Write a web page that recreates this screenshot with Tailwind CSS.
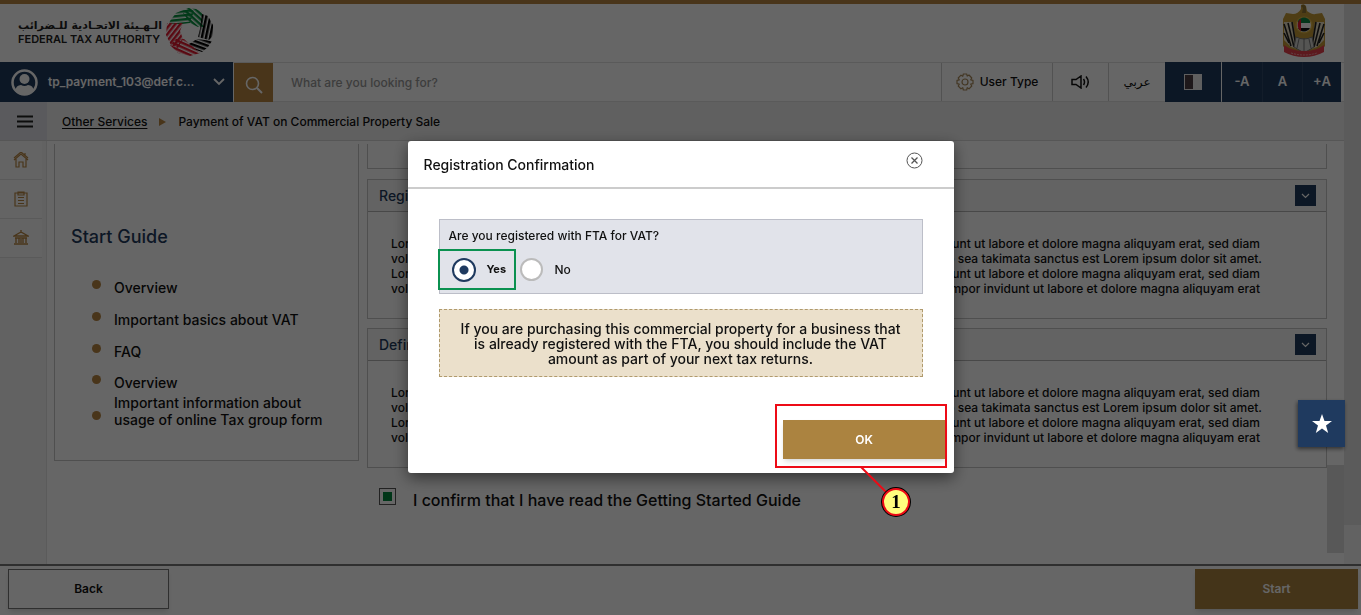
<!DOCTYPE html>
<html lang="en">
<head>
<meta charset="utf-8">
<meta name="viewport" content="width=device-width, initial-scale=1">
<title>Payment of VAT on Commercial Property Sale</title>
<script src="https://cdn.jsdelivr.net/npm/@tailwindcss/browser@4"></script>
</head>
<body class="flex h-screen flex-col overflow-hidden bg-white font-['Inter','Noto_Sans',sans-serif] text-xs font-medium text-[#111]">
<div class="flex min-h-0 flex-1">
  <div class="flex min-w-0 flex-1 flex-col border-t-4 border-[#b68542]">
    <header class="flex h-[58px] shrink-0 items-start justify-between pr-[18px] pl-[18px]">
      <a href="#" class="flex items-center gap-1 pt-1" aria-label="Federal Tax Authority">
        <span class="flex w-[144px] flex-col text-[#222]">
          <span dir="rtl" lang="ar" class="text-left font-['DejaVu_Sans',sans-serif] text-[11px] leading-[14px] font-bold whitespace-nowrap">الـهـيئة الاتحـادية للـضرائب</span>
          <span class="text-[11px] leading-3 font-semibold whitespace-nowrap">FEDERAL TAX AUTHORITY</span>
        </span>
        <svg class="size-12" viewBox="0 0 48 48" aria-hidden="true">
          <defs>
            <pattern id="g1" width="4" height="4" patternUnits="userSpaceOnUse" patternTransform="rotate(-6)"><rect width="4" height="2.500" fill="#07913f"/></pattern>
            <pattern id="g2" width="4" height="4" patternUnits="userSpaceOnUse" patternTransform="rotate(42)"><rect width="4" height="2.500" fill="#07913f"/></pattern>
            <pattern id="k1" width="4" height="4" patternUnits="userSpaceOnUse" patternTransform="rotate(-78)"><rect width="4" height="2.500" fill="#000"/></pattern>
            <pattern id="k2" width="4" height="4" patternUnits="userSpaceOnUse" patternTransform="rotate(20)"><rect width="4" height="2.500" fill="#000"/></pattern>
            <pattern id="r1" width="4" height="4" patternUnits="userSpaceOnUse" patternTransform="rotate(24)"><rect width="4" height="2.500" fill="#e0182d"/></pattern>
            <pattern id="r2" width="4" height="4" patternUnits="userSpaceOnUse" patternTransform="rotate(-52)"><rect width="4" height="2.500" fill="#e0182d"/></pattern>
          </defs>
          <path fill="url(#g1)" d="M4 13 10 5 22 0 28 3 24 15 16 16 3 16Z"/>
          <path fill="url(#g2)" d="M22 0 30 1 36 4 37 19 32 19 24 15 17 5Z"/>
          <path fill="url(#k1)" d="M36 6 42 8 47 17 47 28 43 32 32 29 34 21Z"/>
          <path fill="url(#k2)" d="M46 33 42 39 36 44 27 41 23 36 31 31Z"/>
          <path fill="url(#r1)" d="M10 31 18 31 34 45 24 48 12 45 4 37Z"/>
          <path fill="url(#r2)" d="M1 15 17 15 14 23 17 31 12 40 5 37 0 27Z"/>
        </svg>
      </a>
      <svg class="h-[54px] w-[44px]" viewBox="0 0 44 54" role="img" aria-label="United Arab Emirates emblem">
        <path d="M19 1q3-2 5 1l1 5q6 4 8 3l7-1 3 6v27l-5 6H6l-5-6V15l3-6 7 1q5 0 8-5z" fill="#c49a36"/>
        <path d="M19 2q3-3 5 1v6h-4l1-5z" fill="#8f7434"/>
        <path d="M2 18h9l3 22 4 6-9-3-7-7zM42 18h-9l-3 22-4 6 9-3 7-7z" fill="#e9dfc4"/>
        <path d="M2 20l7 22M6 19l6 24M10 18l4 24M42 20l-7 22M38 19l-6 24M34 18l-4 24M2 29l5 10M42 29l-5 10" stroke="#222" stroke-width="1.600" fill="none"/>
        <circle cx="22" cy="21" r="8.500" fill="#ddb445"/>
        <circle cx="22" cy="21" r="7" fill="#fff"/>
        <path d="M16 17a7 7 0 0 1 12 0v2H16z" fill="#0a8442"/>
        <path d="M16 24h12a7 7 0 0 1-12 0z" fill="#111"/>
        <path d="M19 15v12a7 7 0 0 1 0-12z" fill="#e31b2d"/>
        <path d="M14 33q8 4 16 0l2 10-10 6-10-6z" fill="#d4d4cf" stroke="#777"/>
        <path d="M22 34v13M17 35l-2 9M27 35l2 9" stroke="#777"/>
        <path d="M2 41q8 6 20 6t20-6v7q-9 5-20 5T2 48z" fill="#e5404d"/>
        <path d="M9 49q13 4 26 0" stroke="#f4a0a6" stroke-dasharray="2 1" fill="none"/>
      </svg>
    </header>

    <div class="flex h-10 shrink-0 border-y border-[#e2e2e2] pr-[3px] text-xs">
      <button class="-my-px flex w-[233px] shrink-0 items-center bg-[#1f3a5c] pr-2 pl-[11px] font-semibold text-white">
        <svg class="size-[27px] shrink-0" viewBox="0 0 27 27"><circle cx="13.500" cy="13.500" r="12" fill="#1f3a5c" stroke="#fff" stroke-width="2.500"/><circle cx="13.500" cy="10" r="5" fill="#fff"/><path d="M4 22q1-6 6-6 3.500 2 7 0 5 0 6 6-9.500 8-19 0" fill="#fff"/></svg>
        <span class="ml-[10px] flex-1 text-left">tp_payment_103@def.c...</span>
        <svg class="w-3" viewBox="0 0 12 8" fill="none" stroke="#fff" stroke-width="1.800"><path d="m1 1 5 5 5-5"/></svg>
      </button>
      <button aria-label="Search" class="-mb-px ml-px flex w-[39px] shrink-0 items-center justify-center bg-[#b68542] pt-1">
        <svg class="size-[18px]" viewBox="0 0 18 18" fill="none" stroke="#fff" stroke-width="1.600"><circle cx="7.500" cy="7.500" r="6"/><path d="m12 12 5 5" stroke-width="2"/></svg>
      </button>
      <input type="search" aria-label="Search the site" placeholder="What are you looking for?" class="min-w-0 flex-1 px-[18px] pt-px outline-none placeholder:text-[#999]">
      <button class="flex w-[111px] shrink-0 items-center justify-center gap-[6px] border-l border-[#ccc]">
        <svg class="size-[18px]" viewBox="0 0 18 18" fill="none" stroke="#a98a5b" stroke-width="1.200" stroke-linejoin="round"><path d="M7.300 1h3.400l.5 2.100 1.800-1.100L15.800 5l-1.100 1.800 2.300.5v3.400l-2.300.5 1.100 1.800-2.800 2.800-1.800-1.100-.5 2.300H7.300l-.5-2.300L5 15.800 2.200 13l1.100-1.800-2.300-.5V7.300l2.300-.5L2.200 5 5 2.200l1.800 1.100z"/><circle cx="9" cy="9" r="3"/></svg>
        User Type
      </button>
      <button aria-label="Read aloud" class="flex w-14 shrink-0 items-center justify-center border-l border-[#ccc]">
        <svg class="h-[14px] w-[19px]" viewBox="0 0 19 14" fill="none" stroke="#111" stroke-width="1.500"><path d="M1 4.500h4L10 1v12L5 9.500H1zM12.500 4q2 3 0 6M15 1.500q4.500 5.500 0 11"/></svg>
      </button>
      <button lang="ar" class="w-[57px] shrink-0 border-l border-[#ccc] font-['DejaVu_Sans',sans-serif]">عربي</button>
      <button aria-label="Contrast" class="-my-px flex w-14 shrink-0 items-center justify-center bg-[#1f3a5c]">
        <svg class="h-4 w-[18px]" viewBox="0 0 18 16"><path fill="#eee" d="M0 0h18v16H0z"/><path fill="#4b3c42" d="M1 1h8v14H1z"/></svg>
      </button>
      <button class="-my-px ml-px w-10 shrink-0 bg-[#1f3a5c] text-[13px] font-semibold text-white">-A</button>
      <button class="-my-px w-10 shrink-0 border-l border-[#314a69] bg-[#1f3a5c] text-[13px] font-semibold text-white">A</button>
      <button class="-my-px w-[39px] shrink-0 border-l border-[#314a69] bg-[#1f3a5c] text-[13px] font-semibold text-white">+A</button>
    </div>

    <div class="flex h-[39px] shrink-0 items-stretch border-b border-[#d8d8d8] bg-[#f0f0f0]">
      <button aria-label="Menu" class="flex w-[47px] items-center bg-[#e1e2e8] pl-[17px]">
        <svg class="h-[13px] w-4" viewBox="0 0 16 13" stroke="#222" stroke-width="2"><path d="M0 1.500h16M0 6.500h16M0 11.500h16"/></svg>
      </button>
      <nav aria-label="Breadcrumb" class="flex items-center pt-[2px] pl-[15px]">
        <a href="#" class="underline underline-offset-2">Other Services</a>
        <svg class="mx-3 w-[7px]" viewBox="0 0 7 8"><path fill="#b68542" d="m0 0 7 4-7 4z"/></svg>
        <span>Payment of VAT on Commercial Property Sale</span>
      </nav>
    </div>

    <div class="flex min-h-0 flex-1">
      <nav aria-label="Main" class="w-[47px] shrink-0 border-r border-[#e4e4e4] bg-[#f5f5f5] pr-1">
        <a href="#" aria-label="Home" class="flex h-[39px] items-center justify-center border-b border-[#e0e0e0] bg-[#fafafa]">
          <svg class="size-4" viewBox="0 0 16 16" fill="none" stroke="#b68542" stroke-width="1.200"><path d="m1 8 7-6 7 6M1 6l7-6 7 6M3 7v8h3v-5h4v5h3V7M12 3V1"/></svg></a>
        <a href="#" aria-label="Forms" class="flex h-[39px] items-center justify-center border-b border-[#e0e0e0] bg-[#fafafa]">
          <svg class="h-4 w-[14px]" viewBox="0 0 14 16" fill="none" stroke="#b68542" stroke-width="1.200"><path d="M1 2h12v13H1zM4 1h6v3H4zM4 6.500h6M4 9.500h6M4 12.500h6"/></svg></a>
        <a href="#" aria-label="Authority" class="flex h-[39px] items-center justify-center border-b border-[#e0e0e0] bg-[#fafafa]">
          <svg class="size-4" viewBox="0 0 16 16" fill="none" stroke="#b68542" stroke-width="1.400"><path d="m1 6 7-4 7 4zM2 8h12M3 8v5M6 8v5M10 8v5M13 8v5M1 14h14M8 0v3M8 9v4"/></svg></a>
      </nav>

      <main class="flex min-w-0 flex-1 items-start gap-2 pt-[3px] pl-[7px]">
        <section class="h-[317px] w-[305px] shrink-0 border border-t-0 border-[#c5c5c5] pt-[81px]">
          <h2 class="pl-4 text-lg leading-6 text-[#1f3a5c]">Start Guide</h2>
          <ul class="mt-[30px] pl-[37px] text-sm leading-[17px]">
            <li class="flex h-8 gap-[13px]"><span class="mt-px size-[9px] shrink-0 rounded-full bg-[#b68542]"></span><span>Overview</span></li>
            <li class="flex h-8 gap-[13px]"><span class="mt-px size-[9px] shrink-0 rounded-full bg-[#b68542]"></span><span>Important basics about VAT</span></li>
            <li class="flex h-[31px] gap-[13px]"><span class="mt-px size-[9px] shrink-0 rounded-full bg-[#b68542]"></span><span>FAQ</span></li>
            <li class="flex h-5 gap-[13px]"><span class="mt-px size-[9px] shrink-0 rounded-full bg-[#b68542]"></span><span>Overview</span></li>
            <li class="flex items-center gap-[13px]"><span class="mt-2 size-[9px] shrink-0 rounded-full bg-[#b68542]"></span><span>Important information about<br>usage of online Tax group form</span></li>
          </ul>
        </section>

        <div class="min-w-0 flex-1">
          <div class="h-[25px] border border-t-0 border-[#c5c5c5]"></div>
          <section class="mt-[10px] border border-[#c5c5c5]">
            <div class="flex h-8 items-center justify-between border-b border-[#b5b5b5] bg-[#f8f8f8] pr-[10px] pl-[11px]">
              <h3 class="text-sm text-[#1f3a5c]">Registration</h3>
              <button aria-label="Toggle registration" class="flex size-[21px] items-center justify-center bg-[#1f3a5c]"><svg class="w-[9px]" viewBox="0 0 9 6" fill="none" stroke="#fff" stroke-width="1.200"><path d="m1 1 3.500 3.500L8 1"/></svg></button>
            </div>
            <div class="h-[106px] max-w-[900px] pt-6 pr-[6px] pl-[23px] leading-[15px] whitespace-nowrap">
              <p class="flex max-w-[869px] justify-between"><span>Lorem ipsum dolor sit amet, consetetur sadipscing elitr,</span><span>sed diam nonumy eirmod tempor invidunt ut labore et dolore magna aliquyam erat, sed diam</span></p>
              <p class="flex max-w-[877px] justify-between"><span>voluptua. At vero eos et accusam et justo duo dolores et ea rebum.</span><span>Stet clita kasd gubergren, no sea takimata sanctus est Lorem ipsum dolor sit amet.</span></p>
              <p class="flex max-w-[869px] justify-between"><span>Lorem ipsum dolor sit amet, consetetur sadipscing elitr,</span><span>sed diam nonumy eirmod tempor invidunt ut labore et dolore magna aliquyam erat, sed diam</span></p>
              <p class="flex max-w-[869px] justify-between"><span>voluptua. Lorem ipsum dolor sit amet, consetetur sadipscing elitr,</span><span>sed diam nonumy eirmod tempor invidunt ut labore et dolore magna aliquyam erat</span></p>
            </div>
          </section>
          <section class="mt-[9px] border border-[#c5c5c5]">
            <div class="flex h-8 items-center justify-between border-b border-[#b5b5b5] bg-[#f8f8f8] pr-[10px] pl-[11px]">
              <h3 class="text-sm text-[#1f3a5c]">Definitions</h3>
              <button aria-label="Toggle definitions" class="flex size-[21px] items-center justify-center bg-[#1f3a5c]"><svg class="w-[9px]" viewBox="0 0 9 6" fill="none" stroke="#fff" stroke-width="1.200"><path d="m1 1 3.500 3.500L8 1"/></svg></button>
            </div>
            <div class="h-[106px] max-w-[900px] pt-6 pr-[6px] pl-[23px] leading-[15px] whitespace-nowrap">
              <p class="flex max-w-[869px] justify-between"><span>Lorem ipsum dolor sit amet, consetetur sadipscing elitr,</span><span>sed diam nonumy eirmod tempor invidunt ut labore et dolore magna aliquyam erat, sed diam</span></p>
              <p class="flex max-w-[877px] justify-between"><span>voluptua. At vero eos et accusam et justo duo dolores et ea rebum.</span><span>Stet clita kasd gubergren, no sea takimata sanctus est Lorem ipsum dolor sit amet.</span></p>
              <p class="flex max-w-[869px] justify-between"><span>Lorem ipsum dolor sit amet, consetetur sadipscing elitr,</span><span>sed diam nonumy eirmod tempor invidunt ut labore et dolore magna aliquyam erat, sed diam</span></p>
              <p class="flex max-w-[869px] justify-between"><span>voluptua. Lorem ipsum dolor sit amet, consetetur sadipscing elitr,</span><span>sed diam nonumy eirmod tempor invidunt ut labore et dolore magna aliquyam erat</span></p>
            </div>
          </section>
          <label class="mt-5 flex items-start gap-[17px] pl-3 text-base leading-6">
            <input type="checkbox" checked class="size-[17px] appearance-none border border-[#555] bg-white p-[3px] checked:bg-[#00873e] checked:bg-clip-content">
            I confirm that I have read the Getting Started Guide
          </label>
        </div>
        <div class="-ml-2 w-[17px] shrink-0 self-stretch pt-[321px] pb-[11px]"><div class="h-full bg-[#dcdcdc]"></div></div>
      </main>
    </div>
  </div>
  <div class="w-[17px] shrink-0 border-t-4 border-[#b68542] bg-[#f5f5f5] pb-[39px]"><div class="h-full bg-[#e3e3e3]"></div></div>
</div>

<footer class="flex h-[51px] shrink-0 items-start justify-between border-t-2 border-[#777] pt-[3px] pr-[3px] pl-2 text-xs font-semibold">
  <button class="h-10 w-[161px] border border-[#777] bg-white shadow-md">Back</button>
  <button class="h-10 w-[163px] bg-[#ab8340] text-white shadow-md">Start</button>
</footer>

<div class="fixed inset-0 bg-black/60"></div>
<button aria-label="Favourites" class="fixed top-[400px] right-4 flex size-[47px] items-center justify-center bg-[#1f3a5f] shadow-[-1px_2px_4px_rgba(0,0,0,0.5)]">
  <svg class="size-5" viewBox="0 0 20 20" fill="#fff"><path d="m10 0 2.500 7H20l-6 4.600 2.200 7.400L10 14.600 3.800 19 6 11.600 0 7h7.500z"/></svg>
</button>

<div class="pointer-events-none fixed inset-0 flex items-start justify-center pt-[141px]">
  <div role="dialog" aria-modal="true" aria-labelledby="dlg-title" class="pointer-events-auto relative w-[546px] rounded-[3px] bg-white shadow-[0_5px_15px_rgba(0,0,0,0.5)]">
    <div class="flex h-12 items-start justify-between border-b-2 border-[#ccc] pt-[11px] pr-[31px] pl-4">
      <h1 id="dlg-title" class="pt-px text-sm leading-6">Registration Confirmation</h1>
      <button aria-label="Close"><svg class="size-[17px]" viewBox="0 0 17 17" fill="none" stroke="#555"><circle cx="8.500" cy="8.500" r="7.500"/><path d="m5.500 5.500 6 6m0-6-6 6" stroke-width="1.300"/></svg></button>
    </div>
    <div class="px-[31px] pt-[30px]">
      <fieldset class="h-[75px] border border-[#bcbec8] bg-[#e1e3ea] pt-2">
        <p class="pl-[9px] leading-4">Are you registered with FTA for VAT?</p>
        <div class="mt-[5px] -ml-[2px] flex items-center">
          <label class="flex h-[41px] w-[78px] items-center gap-[11px] border-2 border-[#0b9150] pl-3 text-[11px] font-bold"><input type="radio" name="reg" checked class="size-6 appearance-none rounded-full border-2 border-[#1f3a5f] bg-white checked:bg-[radial-gradient(circle,#1f3a5f_4px,#fff_5px)]">Yes</label>
          <label class="flex items-center gap-3 pl-1"><input type="radio" name="reg" class="size-[23px] appearance-none rounded-full border-2 border-[#bbb] bg-white">No</label>
        </div>
      </fieldset>
      <p class="mt-[15px] flex h-[68px] items-center justify-center border border-dashed border-[#b09a6c] bg-[#ebe0cb] text-center text-sm leading-[15px]"><span>If you are purchasing this commercial property for a business that<br>is already registered with the FTA, you should include the VAT<br>amount as part of your next tax returns.</span></p>
    </div>
    <div class="flex justify-end pt-[43px] pr-2 pb-[14px]">
      <button class="h-[39px] w-[163px] bg-[#ab8340] text-xs font-semibold text-white shadow-md">OK</button>
    </div>
    <div class="pointer-events-none absolute right-[7px] bottom-[5px] h-16 w-[172px] border-2 border-[#ed0b16]"></div>
    <svg class="pointer-events-none absolute top-[325px] left-[450px] h-[54px] w-[60px]" viewBox="0 0 60 54"><path d="M3 1 30 28" stroke="#ed0b16" stroke-width="2"/><circle cx="38" cy="36" r="14" fill="#fffd7e" stroke="#000" stroke-width="2"/><circle cx="38" cy="36" r="13" fill="none" stroke="#ed0b16" stroke-width="2"/><text x="38" y="42" text-anchor="middle" font-family="Liberation Serif, serif" font-size="19" font-weight="700">1</text></svg>
  </div>
</div>
</body>
</html>
